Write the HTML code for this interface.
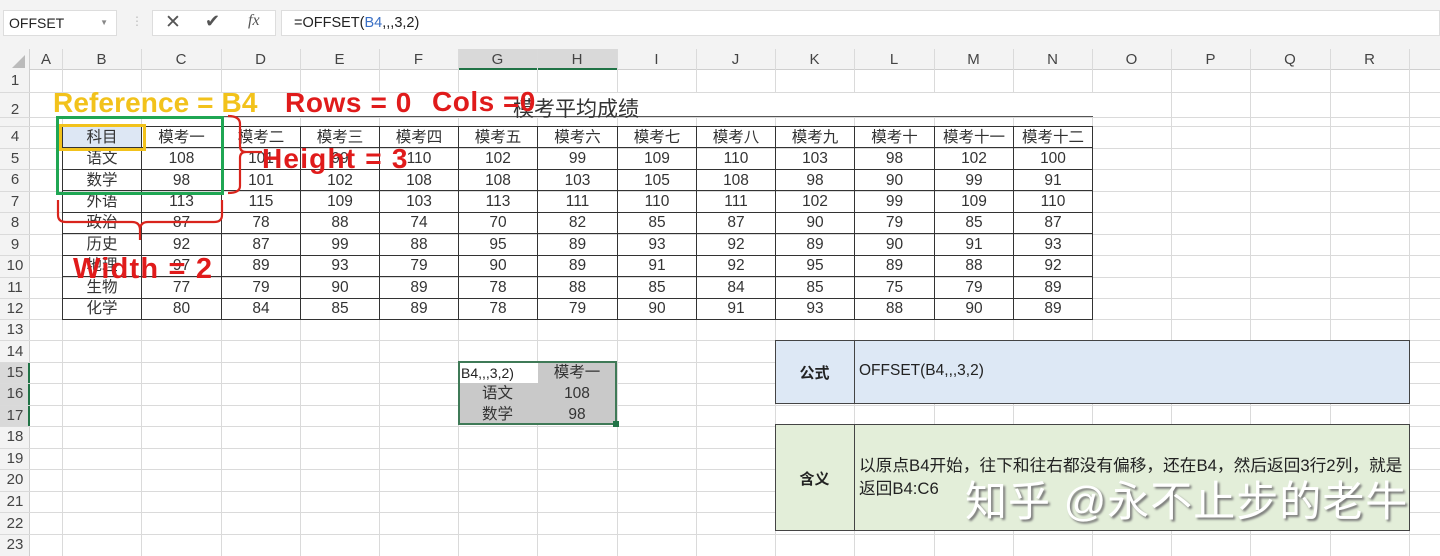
<!DOCTYPE html>
<html><head><meta charset="utf-8"><style>
*{margin:0;padding:0;box-sizing:border-box}
body{width:1440px;height:556px;overflow:hidden;background:#fff;position:relative;font-family:"Liberation Sans","Noto Sans CJK SC",sans-serif;color:#222}
.a{position:absolute}
.vl{position:absolute;top:49px;width:1px;height:507px;background:#dadada}
.hl{position:absolute;left:0;height:1px;width:1440px;background:#dadada}
.ch{position:absolute;top:49px;height:21px;font-size:15px;color:#444;text-align:center;line-height:21px}
.rh{position:absolute;left:0;width:30px;font-size:15px;color:#444;text-align:center}
table.d{position:absolute;left:62px;top:126px;border-collapse:collapse;font-size:15.5px;table-layout:fixed;color:#333}
table.d td{border:1px solid #333;height:21.45px;padding:0;text-align:center;line-height:19px;white-space:nowrap;overflow:hidden}
.ann{position:absolute;font-weight:bold;line-height:1;white-space:nowrap}
.s{position:absolute;text-align:center;font-size:15.5px;line-height:21px;color:#333}
</style></head><body>
<div class="a" style="left:0;top:0;width:1440px;height:49px;background:#f3f3f3"></div>
<div class="a" style="left:3px;top:10px;width:114px;height:26px;background:#fff;border:1px solid #ddd;font-size:14px;line-height:24px;padding-left:5px">OFFSET<span style="position:absolute;right:8px;font-size:8px;color:#888">▼</span></div>
<div class="a" style="left:131px;top:14px;color:#bbb;font-size:12px">⋮</div>
<div class="a" style="left:152px;top:10px;width:124px;height:26px;background:#fff;border:1px solid #ddd"></div>
<div class="a" style="left:165px;top:11px;font-size:19px;color:#555">✕</div>
<div class="a" style="left:205px;top:11px;font-size:18px;color:#555">✔</div>
<div class="a" style="left:248px;top:12px;font-size:16px;color:#555;font-family:'Liberation Serif',serif;font-style:italic">fx</div>
<div class="a" style="left:281px;top:10px;width:1159px;height:26px;background:#fff;border:1px solid #ddd;font-size:14.5px;line-height:24px;padding-left:12px">=OFFSET(<span style="color:#3a6fc4">B4</span>,,,3,2)</div>
<div class="a" style="left:0;top:49px;width:1440px;height:21px;background:#f3f3f3;border-bottom:1px solid #cfcfcf"></div>
<div class="a" style="left:0;top:49px;width:30px;height:507px;background:#f3f3f3;border-right:1px solid #cfcfcf"></div>
<div class="a" style="left:458px;top:49px;width:159px;height:21px;background:#d9d9d9;border-bottom:2px solid #217346"></div>
<div class="a" style="left:0;top:362px;width:30px;height:64px;background:#d9d9d9;border-right:2px solid #217346"></div>
<div class="a" style="left:12px;top:55px;width:0;height:0;border-left:13px solid transparent;border-bottom:13px solid #bbb"></div>
<div class="vl" style="left:62px"></div><div class="vl" style="left:141px"></div><div class="vl" style="left:221px"></div><div class="vl" style="left:300px"></div><div class="vl" style="left:379px"></div><div class="vl" style="left:458px"></div><div class="vl" style="left:537px"></div><div class="vl" style="left:617px"></div><div class="vl" style="left:696px"></div><div class="vl" style="left:775px"></div><div class="vl" style="left:854px"></div><div class="vl" style="left:934px"></div><div class="vl" style="left:1013px"></div><div class="vl" style="left:1092px"></div><div class="vl" style="left:1171px"></div><div class="vl" style="left:1250px"></div><div class="vl" style="left:1330px"></div><div class="vl" style="left:1409px"></div>
<div class="hl" style="top:92px"></div><div class="hl" style="top:117px"></div><div class="hl" style="top:126px"></div><div class="hl" style="top:148px"></div><div class="hl" style="top:169px"></div><div class="hl" style="top:191px"></div><div class="hl" style="top:212px"></div><div class="hl" style="top:234px"></div><div class="hl" style="top:255px"></div><div class="hl" style="top:277px"></div><div class="hl" style="top:298px"></div><div class="hl" style="top:319px"></div><div class="hl" style="top:340px"></div><div class="hl" style="top:362px"></div><div class="hl" style="top:383px"></div><div class="hl" style="top:405px"></div><div class="hl" style="top:426px"></div><div class="hl" style="top:448px"></div><div class="hl" style="top:469px"></div><div class="hl" style="top:491px"></div><div class="hl" style="top:512px"></div><div class="hl" style="top:534px"></div>
<div class="ch" style="left:30px;width:32px">A</div><div class="ch" style="left:62px;width:79px">B</div><div class="ch" style="left:141px;width:80px">C</div><div class="ch" style="left:221px;width:79px">D</div><div class="ch" style="left:300px;width:79px">E</div><div class="ch" style="left:379px;width:79px">F</div><div class="ch" style="left:458px;width:79px">G</div><div class="ch" style="left:537px;width:80px">H</div><div class="ch" style="left:617px;width:79px">I</div><div class="ch" style="left:696px;width:79px">J</div><div class="ch" style="left:775px;width:79px">K</div><div class="ch" style="left:854px;width:80px">L</div><div class="ch" style="left:934px;width:79px">M</div><div class="ch" style="left:1013px;width:79px">N</div><div class="ch" style="left:1092px;width:79px">O</div><div class="ch" style="left:1171px;width:79px">P</div><div class="ch" style="left:1250px;width:80px">Q</div><div class="ch" style="left:1330px;width:79px">R</div>
<div class="rh" style="top:72px">1</div><div class="rh" style="top:101px">2</div><div class="rh" style="top:128px">4</div><div class="rh" style="top:150px">5</div><div class="rh" style="top:171px">6</div><div class="rh" style="top:193px">7</div><div class="rh" style="top:214px">8</div><div class="rh" style="top:236px">9</div><div class="rh" style="top:257px">10</div><div class="rh" style="top:279px">11</div><div class="rh" style="top:300px">12</div><div class="rh" style="top:321px">13</div><div class="rh" style="top:343px">14</div><div class="rh" style="top:364px">15</div><div class="rh" style="top:385px">16</div><div class="rh" style="top:407px">17</div><div class="rh" style="top:428px">18</div><div class="rh" style="top:450px">19</div><div class="rh" style="top:471px">20</div><div class="rh" style="top:493px">21</div><div class="rh" style="top:515px">22</div><div class="rh" style="top:536px">23</div>
<div class="a" style="left:62px;top:93px;width:1031px;height:24px;background:#fff;border-bottom:1px solid #555"></div>
<div class="a" style="left:513px;top:93px;font-size:21px;color:#333">模考平均成绩</div>
<table class="d">
<colgroup><col style="width:79px"><col style="width:80px"><col style="width:79px"><col style="width:79px"><col style="width:79px"><col style="width:79px"><col style="width:80px"><col style="width:79px"><col style="width:79px"><col style="width:79px"><col style="width:80px"><col style="width:79px"><col style="width:79px"></colgroup>
<tr><td style="background:#dde7f4">科目</td><td>模考一</td><td>模考二</td><td>模考三</td><td>模考四</td><td>模考五</td><td>模考六</td><td>模考七</td><td>模考八</td><td>模考九</td><td>模考十</td><td>模考十一</td><td>模考十二</td></tr>
<tr><td>语文</td><td>108</td><td>101</td><td>99</td><td>110</td><td>102</td><td>99</td><td>109</td><td>110</td><td>103</td><td>98</td><td>102</td><td>100</td></tr>
<tr><td>数学</td><td>98</td><td>101</td><td>102</td><td>108</td><td>108</td><td>103</td><td>105</td><td>108</td><td>98</td><td>90</td><td>99</td><td>91</td></tr>
<tr><td>外语</td><td>113</td><td>115</td><td>109</td><td>103</td><td>113</td><td>111</td><td>110</td><td>111</td><td>102</td><td>99</td><td>109</td><td>110</td></tr>
<tr><td>政治</td><td>87</td><td>78</td><td>88</td><td>74</td><td>70</td><td>82</td><td>85</td><td>87</td><td>90</td><td>79</td><td>85</td><td>87</td></tr>
<tr><td>历史</td><td>92</td><td>87</td><td>99</td><td>88</td><td>95</td><td>89</td><td>93</td><td>92</td><td>89</td><td>90</td><td>91</td><td>93</td></tr>
<tr><td>地理</td><td>97</td><td>89</td><td>93</td><td>79</td><td>90</td><td>89</td><td>91</td><td>92</td><td>95</td><td>89</td><td>88</td><td>92</td></tr>
<tr><td>生物</td><td>77</td><td>79</td><td>90</td><td>89</td><td>78</td><td>88</td><td>85</td><td>84</td><td>85</td><td>75</td><td>79</td><td>89</td></tr>
<tr><td>化学</td><td>80</td><td>84</td><td>85</td><td>89</td><td>78</td><td>79</td><td>90</td><td>91</td><td>93</td><td>88</td><td>90</td><td>89</td></tr>
</table>
<div class="a" style="left:56px;top:116px;width:168px;height:79px;border:3px solid #1fa653"></div>
<div class="a" style="left:59px;top:124px;width:87px;height:27px;border:3px solid #f2c21b"></div>
<svg class="a" style="left:0;top:0" width="600" height="300"><g fill="none" stroke="#d9241c" stroke-width="2.2">
<path d="M228 116 Q240 116 240 124 L240 146 Q240 152 246 152 Q240 152 240 158 L240 186 Q240 193 228 193"/>
<path d="M246 152 L262 152"/>
<path d="M58 200 L58 215 Q58 222 66 222 L132 222 Q140 222 140 230 L140 240 M140 230 Q140 222 148 222 L214 222 Q222 222 222 215 L222 200"/>
</g></svg>
<div class="ann" style="left:53px;top:89px;color:#f2c21b;font-weight:600;font-size:28px;letter-spacing:0.1px">Reference = B4</div>
<div class="ann" style="left:285px;top:89px;color:#e01b1b;font-size:28px;letter-spacing:0.6px">Rows = 0</div>
<div class="ann" style="left:432px;top:88px;color:#e01b1b;font-size:28px;letter-spacing:0.5px">Cols =0</div>
<div class="ann" style="left:262px;top:145px;color:#e01b1b;font-size:28px;letter-spacing:1.2px">Height = 3</div>
<div class="ann" style="left:73px;top:255px;color:#e01b1b;font-size:29px;letter-spacing:1.2px">Width = 2</div>
<div class="a" style="left:458px;top:361px;width:159px;height:64px;background:#c9c9c9;border:2px solid #3f7a57"></div>
<div class="a" style="left:460px;top:363px;width:78px;height:20px;background:#fff"></div>
<div class="a" style="left:461px;top:363px;font-size:14px;line-height:21px">B4,,,3,2)</div>
<div class="s" style="left:537px;top:362px;width:80px">模考一</div>
<div class="s" style="left:458px;top:383px;width:79px">语文</div>
<div class="s" style="left:537px;top:383px;width:80px">108</div>
<div class="s" style="left:458px;top:404px;width:79px">数学</div>
<div class="s" style="left:537px;top:404px;width:80px">98</div>
<div class="a" style="left:613px;top:421px;width:6px;height:6px;background:#217346"></div>
<div class="a" style="left:775px;top:340px;width:635px;height:64px;background:#dde8f5;border:1px solid #444"></div>
<div class="a" style="left:854px;top:340px;width:1px;height:64px;background:#444"></div>
<div class="a" style="left:775px;top:362px;width:79px;text-align:center;font-size:15px;font-weight:bold">公式</div>
<div class="a" style="left:859px;top:362px;font-size:15.5px">OFFSET(B4,,,3,2)</div>
<div class="a" style="left:775px;top:424px;width:635px;height:107px;background:#e3eed9;border:1px solid #444"></div>
<div class="a" style="left:854px;top:424px;width:1px;height:107px;background:#444"></div>
<div class="a" style="left:775px;top:468px;width:79px;text-align:center;font-size:15px;font-weight:bold">含义</div>
<div class="a" style="left:859px;top:454px;font-size:16.7px;line-height:23px;width:560px;white-space:nowrap">以原点B4开始，往下和往右都没有偏移，还在B4，然后返回3行2列，就是<br>返回B4:C6</div>
<div class="a" style="left:965px;top:468px;font-size:42px;color:#fff;text-shadow:2px 2px 2px #777;white-space:nowrap;letter-spacing:1px">知乎 @永不止步的老牛</div>
</body></html>
